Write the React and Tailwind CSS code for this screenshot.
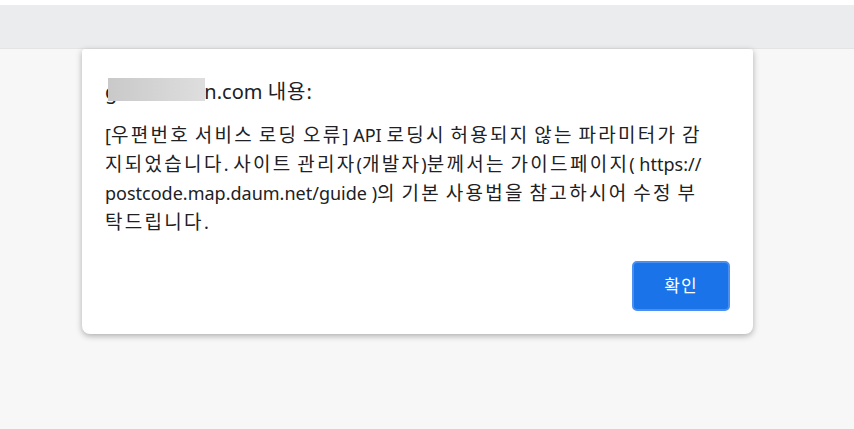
import React from 'react';

const font = { fontFamily: '"Noto Sans", "Noto Sans CJK KR", sans-serif' };

// 한글 구간만 자간을 넓혀 원본(맑은 고딕)의 폭에 맞춘다
const Spaced = ({ text, hangulClass }) => {
    const parts = text.split(/([\uAC00-\uD7A3]+)/);
    return parts.map((p, i) =>
        /[\uAC00-\uD7A3]/.test(p)
            ? <span key={i} className={hangulClass}>{p}</span>
            : <span key={i}>{p}</span>
    );
};

const lines = [
    '[우편번호 서비스 로딩 오류] API 로딩시 허용되지 않는 파라미터가 감',
    '지되었습니다. 사이트 관리자(개발자)분께서는 가이드페이지( https://',
    'postcode.map.daum.net/guide )의 기본 사용법을 참고하시어 수정 부',
    '탁드립니다.',
];

const App = () => {
    return (
        <div className="w-[854px] h-[429px] bg-[#f7f7f7] overflow-hidden flex flex-col" style={font}>
            <div className="h-[5px] bg-white" />
            <div className="h-[43px] bg-[#ebecee]" />
            <div className="relative flex-1 border-t border-[#e4e4e4]">
                <div className="absolute left-[82px] top-0 w-[671px] h-[285px] bg-white rounded-b-lg rounded-t-[3px] shadow-[0_2px_6px_rgba(0,0,0,0.3)] flex flex-col">
                    <div className="pl-[23px] pt-[27px] flex items-center h-[58px]">
                        <span className="relative text-[20px] text-[#202124] leading-none whitespace-nowrap">
                            <span>g</span>
                            <span className="inline-block w-[87px]" />n.com <Spaced text="내용" hangulClass="tracking-[1px]" />:
                            <span className="absolute left-[3px] top-[-4px] w-[97px] h-[23px] bg-gradient-to-r from-[#c9c9c9] to-[#dedede]" />
                        </span>
                    </div>
                    <div className="px-[23px] mt-[14px] text-[18px] leading-[29px] text-[#202124]">
                        {lines.map((l, i) => (
                            <div key={i} className="whitespace-nowrap">
                                <Spaced text={l} hangulClass="text-[19px] tracking-[2.3px]" />
                            </div>
                        ))}
                    </div>
                    <div className="mt-auto mb-[23px] mr-[23px] flex justify-end">
                        <button className="w-[98px] h-[50px] rounded-[5px] bg-[#1a73e8] border-2 border-[#4b8ff0] text-white text-[17px] tracking-[1px]">
                            확인
                        </button>
                    </div>
                </div>
            </div>
        </div>
    );
};

export default App;
